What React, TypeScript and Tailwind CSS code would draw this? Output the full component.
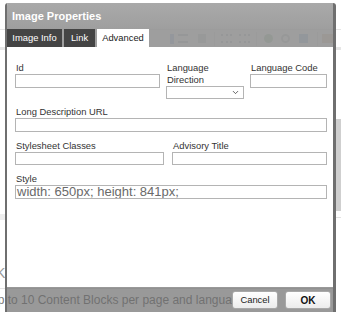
import { ChevronDown } from 'lucide-react'

const font = { fontFamily: '"Liberation Sans", Arial, sans-serif' }

function Field({ label, className = '', h = 'h-[14px]', children }: { label: string; className?: string; h?: string; children?: React.ReactNode }) {
  return (
    <div className={`flex flex-col ${className}`}>
      <label className="text-[9.4px] leading-[11px] text-[#333] pl-px mb-px">{label}</label>
      <div className={`${h} border border-[#b4b4b4] bg-white overflow-hidden`}>{children}</div>
    </div>
  )
}

// faint editor toolbar behind the dialog
function Toolbar() {
  return (
    <div className="h-[21px] border-t border-b-[3px] border-[#e6e6e6] flex items-center">
      <div className="w-[170px]" />
      <div className="flex items-center opacity-60">
        <div className="w-[4px] h-[10px] bg-[#5b8fd6]" />
        <div className="ml-[4px] w-[10px] h-[9px] border-y-2 border-[#7a8796]" />
        <div className="ml-[10px] w-[8px] h-[9px] bg-[#9aa4ae]" />
        <div className="ml-[8px] w-px h-[14px] bg-[#c8c8c8]" />
        <div className="ml-[6px] w-[11px] h-[9px] border-y-2 border-dotted border-[#7a8796]" />
        <div className="ml-[7px] w-[11px] h-[9px] border-y-2 border-dotted border-[#7a8796]" />
        <div className="ml-[6px] w-px h-[14px] bg-[#c8c8c8]" />
        <div className="ml-[7px] w-[9px] h-[9px] rounded-full bg-[#4f9b5a]" />
        <div className="ml-[8px] w-[9px] h-[9px] rounded-full border-2 border-[#8c949c]" />
        <div className="ml-[9px] w-[9px] h-[9px] bg-[#4d86cf]" />
        <div className="ml-[9px] w-px h-[14px] bg-[#c8c8c8]" />
        <div className="ml-[4px] w-[11px] h-[9px] bg-[#c9906a]" />
      </div>
    </div>
  )
}

export default function App() {
  return (
    <div className="relative w-[341px] h-[316px] overflow-hidden bg-white" style={font}>
      {/* Page behind the dialog */}
      <div className="flex flex-col h-full">
        <div className="h-[29px] pt-[4px] text-[14px] leading-[16px] text-[#666] -ml-[5px]">t</div>
        <Toolbar />
        <div className="flex flex-1">
          <div className="flex-1 flex flex-col">
            <div className="h-[19px] text-[#7fa8d8] text-[11px] text-right pr-[1px]">f</div>
            <div className="h-[145px]" />
            <div className="h-[6px] bg-[#eeeeee]" />
            <div className="h-[45px]" />
            <div className="text-[14px] leading-[16px] text-[#999] -ml-[4px]">K</div>
            <div className="h-[8px] border-b border-[#e4e4e4]" />
            <div className="mt-[4px] text-[12px] leading-[14px] text-[#7a7a7a] -ml-[11px] whitespace-nowrap">
              Up to 10 Content Blocks per page and language
            </div>
          </div>
          <div className="w-[5px] flex flex-col">
            <div className="h-[69px]" />
            <div className="h-[92px] bg-[#cfcfcf]" />
            <div className="h-px bg-[#e2e2e2] mt-[6px]" />
          </div>
        </div>
      </div>

      {/* Dialog */}
      <div className="absolute left-[5px] top-[3px] w-[331px] h-[309px] flex flex-col border-l-2 border-r-[3px] border-[#6f6f6f] rounded-t-[3px] overflow-hidden">
        <div className="h-[26px] flex items-center pl-[5px] bg-gradient-to-b from-[rgba(160,160,160,0.9)] to-[rgba(148,148,148,0.9)]">
          <span className="text-white font-bold text-[11px]">Image Properties</span>
        </div>
        <div className="h-[18px] flex items-end gap-[2px] bg-[rgba(148,148,148,0.9)]">
          <div className="h-[18px] w-[55px] bg-[#444] text-white text-[9.4px] flex items-center justify-center">Image Info</div>
          <div className="h-[18px] w-[31px] bg-[#444] text-white text-[9.4px] flex items-center justify-center">Link</div>
          <div className="h-[18px] w-[52px] bg-white text-[#222] text-[9.4px] flex items-center justify-center">Advanced</div>
        </div>
        <div className="h-[240px] bg-white pt-[15px] pl-[8px] pr-[6px] flex flex-col">
          <div className="flex gap-[6px]">
            <Field label="Id" className="w-[145px]" />
            <div className="w-[78px] flex flex-col">
              <label className="text-[9.4px] leading-[12px] text-[#333] pl-px">
                Language
                <br />
                Direction
              </label>
              <div className="h-[13px] border border-[#b4b4b4] flex items-center justify-end pr-[3px]">
                <ChevronDown size={9} strokeWidth={2} className="text-[#333]" />
              </div>
            </div>
            <Field label="Language Code" className="flex-1" />
          </div>
          <Field label="Long Description URL" className="mt-[7px]" />
          <div className="flex gap-[8px] mt-[8px]">
            <Field label="Stylesheet Classes" className="w-[149px]" h="h-[13px]" />
            <Field label="Advisory Title" className="flex-1" h="h-[13px]" />
          </div>
          <Field label="Style" className="mt-[8px]">
            <div className="text-[13px] leading-[12px] text-[#6a6a6a] pl-px whitespace-nowrap">width: 650px; height: 841px;</div>
          </Field>
        </div>
        <div className="flex-1 flex items-start justify-end gap-[7px] pt-[4px] pr-[2px] bg-[rgba(110,110,110,0.7)]">
          <button className="h-[18px] w-[46px] rounded-[3px] border border-[#a8a8a8] bg-gradient-to-b from-white to-[#ececec] text-[9.4px] text-[#222]">
            Cancel
          </button>
          <button className="h-[18px] w-[46px] rounded-[3px] border border-[#a8a8a8] bg-gradient-to-b from-white to-[#ececec] text-[10px] font-bold text-[#111]">
            OK
          </button>
        </div>
      </div>
    </div>
  )
}
